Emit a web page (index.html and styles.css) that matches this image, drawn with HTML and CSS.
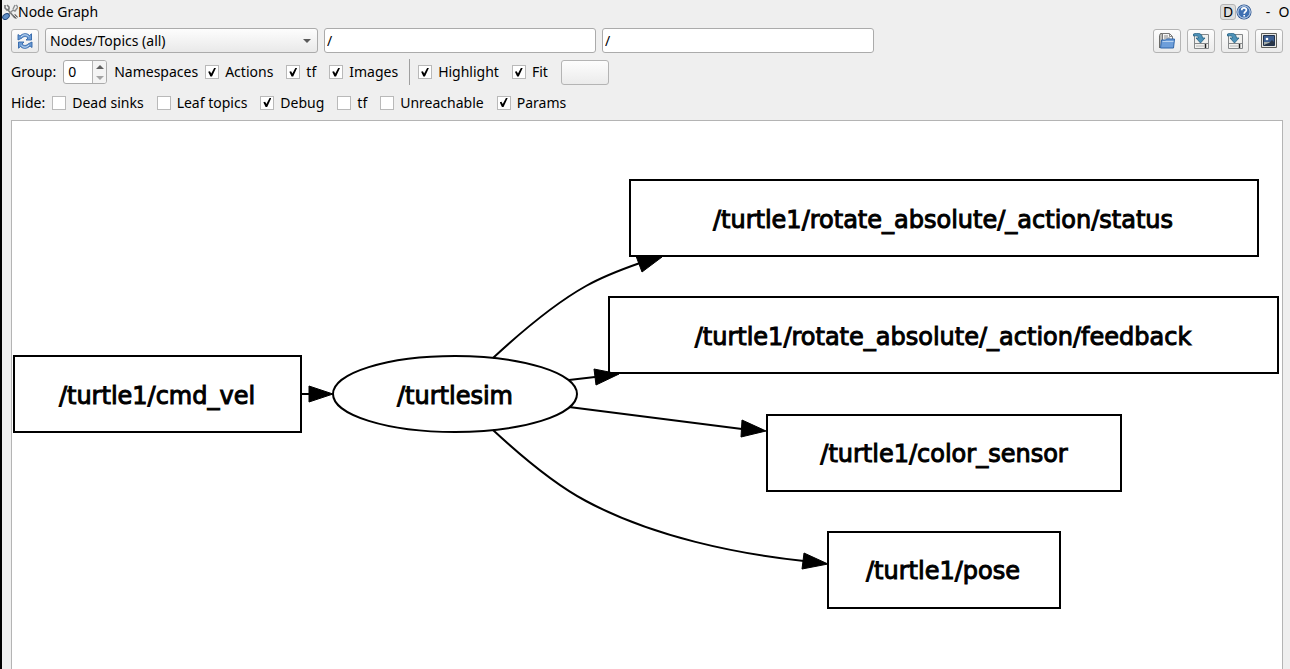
FILE: index.html
```html
<!DOCTYPE html>
<html lang="en">
<head>
<meta charset="utf-8">
<title>Node Graph</title>
<link rel="stylesheet" href="styles.css">
</head>
<body>
<main class="window">
  <header class="titlebar">
    <svg class="app-icon" viewBox="0 0 16 16" aria-hidden="true">
      <path d="M3 1v3l2 2 2-1V3L5 1M6 6l7 8" fill="none" stroke="#77797a" stroke-width="1.6"/>
      <path d="M14 1l2 2-3 4-2-1-6 6M11 5l2-4" fill="none" stroke="#8c8e8f" stroke-width="1.4"/>
      <path d="M12 11l3 3" stroke="#666" stroke-width="3"/>
      <path d="M12 11l3 3" stroke="#ddd" stroke-width="1"/>
      <ellipse cx="4" cy="12.500" rx="3.600" ry="2.500" transform="rotate(-35 4 12.500)" fill="#5f8fc8" stroke="#24477c"/>
    </svg>
    <h1 class="title">Node Graph</h1>
    <button class="dock-btn" type="button">D</button>
    <button class="plain-btn" type="button" aria-label="Help">
      <svg class="icon" viewBox="0 0 16 16" aria-hidden="true">
        <circle cx="8" cy="8" r="7.500" fill="#24508f"/>
        <circle cx="8" cy="8" r="6.200" fill="#3f70b2" stroke="#dce7f5" stroke-width="1"/>
        <path d="M5.700 6.200C5.700 3.200 10.500 3.300 10.400 6c0 1.600-2.200 1.700-2.200 3.700M8.200 11v1.600" fill="none" stroke="#fff" stroke-width="1.700"/>
      </svg>
    </button>
    <button class="plain-btn minimize" type="button">-</button>
    <button class="plain-btn float" type="button">O</button>
  </header>

  <div class="toolbar">
    <button class="btn tool" type="button" aria-label="Refresh">
      <svg class="icon" viewBox="0 0 16 16" aria-hidden="true">
        <path d="M1 7V1.500l2 1.600C6-.2 10.500.2 12.500 2.500L14.500.800V7H9l2-2C9 2.800 6.500 3.300 5 5z" fill="#6b9bd4" stroke="#2f64a8" stroke-width=".9"/>
        <path d="M15 9v5.500l-2-1.600c-3 3.300-7.500 2.900-9.500.6L1.500 15.200V9H7l-2 2c2 2.200 4.500 1.700 6 0z" fill="#6b9bd4" stroke="#2f64a8" stroke-width=".9"/>
        <path d="M4 4C6.500 1 9.500 1.300 11.500 3.500M12 12c-2.500 3-5.500 2.700-7.500.5" fill="none" stroke="#c6dbf2" stroke-width="1"/>
      </svg>
    </button>
    <div class="combo">
      <select class="combo-select" aria-label="Graph type"><option>Nodes/Topics (all)</option></select>
      <svg class="combo-arrow" viewBox="0 0 8 4" aria-hidden="true"><path d="M0 0h8L4 4z" fill="#5a5a5a"/></svg>
    </div>
    <input class="field" type="text" value="/" aria-label="Node filter">
    <input class="field" type="text" value="/" aria-label="Topic filter">
    <div class="actions">
      <button class="btn tool" type="button" aria-label="Load graph">
        <svg class="icon" viewBox="0 0 16 16" aria-hidden="true">
          <path d="M.500 15V2.500l1-2H4V8" fill="#b9b9b6" stroke="#6b6b68"/>
          <path d="M3.500 9V.500h7l3 3V9z" fill="#f5f5f5" stroke="#777"/>
          <path d="M10.500.500v3h3M5 3h4M5 5h6" fill="none" stroke="#888"/>
          <path d="M1.500 15l1-8h4l1-1h8l-1 9z" fill="#6d9eda" stroke="#2f65a9"/>
          <path d="M3.500 8.500h11" stroke="#b7d2f0"/>
        </svg>
      </button>
      <button class="btn tool" type="button" aria-label="Save as DOT">
        <svg class="icon" viewBox="0 0 16 16" aria-hidden="true">
          <path d="M1.500 1.500h14v14h-14z" fill="#f1f1ef" stroke="#85888a"/>
          <path d="M2 10.500h13" stroke="#85888a"/>
          <path d="M3 13h8" stroke="#b8b8b8"/><path d="M12.500 11v4" stroke="#222" stroke-width="1.500"/>
          <path d="M.500 1C5-.500 9 0 9.500 5H12L7.500 10 3 5h2.500C5.500 3 4 2.500.500 3z" fill="#4c91b8" stroke="#235f83" stroke-width=".8"/>
        </svg>
      </button>
      <button class="btn tool" type="button" aria-label="Save as SVG">
        <svg class="icon" viewBox="0 0 16 16" aria-hidden="true">
          <path d="M1.500 1.500h14v14h-14z" fill="#f1f1ef" stroke="#85888a"/>
          <path d="M2 10.500h13" stroke="#85888a"/>
          <path d="M3 13h8" stroke="#b8b8b8"/><path d="M12.500 11v4" stroke="#222" stroke-width="1.500"/>
          <path d="M.500 1C5-.500 9 0 9.500 5H12L7.500 10 3 5h2.500C5.500 3 4 2.500.500 3z" fill="#4c91b8" stroke="#235f83" stroke-width=".8"/>
        </svg>
      </button>
      <button class="btn tool" type="button" aria-label="Save as image">
        <svg class="icon" viewBox="0 0 16 16" aria-hidden="true">
          <path d="M.500 .500h15v14H.500z" fill="#e8e8e3" stroke="#5c5c58"/>
          <path d="M2.500 2.500h11v10h-11z" fill="#3d5f91" stroke="#22324d"/>
          <path d="M3 9h10v3H3z" fill="#a3acab"/>
          <path d="M3 12c2-1 4-2 5-2l3-3 2 2v3z" fill="#2a3647"/>
          <circle cx="6" cy="6" r="1.300" fill="#fff"/>
        </svg>
      </button>
    </div>
  </div>

  <div class="options">
    <label class="caption" for="group">Group:</label>
    <div class="spin">
      <input class="spin-input" id="group" type="text" inputmode="numeric" value="0">
      <div class="spin-steps">
        <button class="step" type="button" aria-label="Increase"><svg class="step-arrow" viewBox="0 0 8 4" aria-hidden="true"><path d="M0 4h8L4 0z" fill="#606060"/></svg></button>
        <button class="step" type="button" aria-label="Decrease"><svg class="step-arrow" viewBox="0 0 8 4" aria-hidden="true"><path d="M0 0h8L4 4z" fill="#a4a4a4"/></svg></button>
      </div>
    </div>
    <span class="caption">Namespaces</span>
    <div class="checks">
      <label class="check"><input class="box" type="checkbox" checked>Actions</label>
      <label class="check"><input class="box" type="checkbox" checked>tf</label>
      <label class="check"><input class="box" type="checkbox" checked>Images</label>
    </div>
    <div class="checks divided">
      <label class="check"><input class="box" type="checkbox" checked>Highlight</label>
      <label class="check"><input class="box" type="checkbox" checked>Fit</label>
      <button class="btn blank" type="button" aria-label="Fit in view"></button>
    </div>
  </div>

  <div class="options hide-row">
    <span class="caption">Hide:</span>
    <div class="checks">
      <label class="check"><input class="box" type="checkbox">Dead sinks</label>
      <label class="check"><input class="box" type="checkbox">Leaf topics</label>
      <label class="check"><input class="box" type="checkbox" checked>Debug</label>
      <label class="check"><input class="box" type="checkbox">tf</label>
      <label class="check"><input class="box" type="checkbox">Unreachable</label>
      <label class="check"><input class="box" type="checkbox" checked>Params</label>
    </div>
  </div>

  <section class="canvas" aria-label="Graph">
    <svg class="graph" viewBox="12 121 1270 548" preserveAspectRatio="xMidYMin meet">
      <g class="edges">
        <path d="M301 394H309"/>
        <path d="M493 358C520 333 552 305 586 286C602 277 620 270 640 263"/>
        <path d="M569 380L595 377"/>
        <path d="M569 407L742 429"/>
        <path d="M493 430C520 455 552 483 586 501C653 537 738 554 804 561"/>
      </g>
      <g class="heads">
        <path d="M309 386L333 394L309 402z"/>
        <path d="M636 256L662 257L642 272z"/>
        <path d="M594 369L619 374L596 385z"/>
        <path d="M742 420L766 431L741 437z"/>
        <path d="M804 553L828 564L802 569z"/>
      </g>
      <g class="nodes">
        <rect x="14" y="356" width="287" height="76"/>
        <ellipse cx="455" cy="394" rx="122" ry="38"/>
        <rect x="630" y="180" width="628" height="76"/>
        <rect x="609" y="297" width="669" height="76"/>
        <rect x="767" y="415" width="354" height="76"/>
        <rect x="828" y="532" width="232" height="76"/>
      </g>
      <g class="names">
        <text x="157" y="404">/turtle1/cmd_vel</text>
        <text x="455" y="404">/turtlesim</text>
        <text x="943" y="228">/turtle1/rotate_absolute/_action/status</text>
        <text x="943" y="345">/turtle1/rotate_absolute/_action/feedback</text>
        <text x="944" y="462">/turtle1/color_sensor</text>
        <text x="943" y="579">/turtle1/pose</text>
      </g>
    </svg>
  </section>
</main>
</body>
</html>
```
FILE: styles.css
```css
* { box-sizing: border-box; }

body {
  margin: 0;
  background: #efefef;
  color: #000;
  font: 14px/20px "Noto Sans", "Open Sans", sans-serif;
}

button, input, select {
  margin: 0;
  padding: 0;
  color: inherit;
  font: inherit;
}

.window {
  display: flex;
  flex-direction: column;
  height: 100vh;
  border-left: 2px solid #000;
  overflow: hidden;
}

.titlebar {
  display: flex;
  align-items: center;
  height: 24px;
  flex: none;
}

.app-icon { width: 16px; height: 16px; }
.title { margin: 0 auto 0 0; font-size: 14px; font-weight: 400; }
.icon { display: block; width: 16px; height: 16px; }

.dock-btn {
  width: 16px;
  height: 16px;
  border: 1px solid #b4b4b4;
  border-radius: 3px;
  background: #dedede;
  line-height: 14px;
}

.plain-btn { border: 0; background: none; }
.minimize { width: 14px; margin-left: 9px; }
.float { width: 12px; margin-left: 3px; }

.toolbar {
  display: flex;
  align-items: center;
  gap: 6px;
  padding: 4px 7px 0 9px;
}

.btn {
  border: 1px solid #b4b4b4;
  border-radius: 3px;
  background: linear-gradient(#fdfdfd, #ebebeb);
}

.tool {
  display: flex;
  align-items: center;
  justify-content: center;
  flex: none;
  width: 28px;
  height: 24px;
}

.combo { position: relative; flex: 0 1 273px; }

.combo-select {
  display: block;
  width: 100%;
  height: 25px;
  padding: 0 20px 0 4px;
  border: 1px solid #ababab;
  border-radius: 3px;
  background: linear-gradient(#fdfdfd, #e9e9e9);
  appearance: none;
}

.combo-arrow {
  position: absolute;
  top: 11px;
  right: 7px;
  width: 8px;
  height: 4px;
  pointer-events: none;
}

.field {
  flex: 0 1 272px;
  min-width: 0;
  height: 25px;
  padding: 0 2px;
  border: 1px solid #ababab;
  border-radius: 3px;
  background: #fff;
}

.actions { display: flex; gap: 6px; margin-left: auto; }

.options {
  display: flex;
  align-items: center;
  gap: 7px;
  padding: 6px 9px 0;
  min-height: 32px;
}

.hide-row { min-height: 35px; padding-top: 0; }

.spin {
  display: flex;
  width: 44px;
  height: 24px;
  border: 1px solid #ababab;
  border-radius: 3px;
  background: #fff;
  overflow: hidden;
}

.spin-input { flex: 1; min-width: 0; padding-left: 4px; border: 0; background: none; }
.spin-steps { display: flex; flex-direction: column; width: 14px; border-left: 1px solid #b4b4b4; }

.step {
  display: flex;
  flex: 1;
  align-items: center;
  justify-content: center;
  border: 0;
  background: #f4f4f4;
}

.step-arrow { width: 8px; height: 4px; }

.checks { display: flex; align-items: center; gap: 13px; }
.divided { height: 26px; margin-left: 4px; padding-left: 8px; border-left: 1px solid #9f9f9f; }
.check { display: flex; align-items: center; gap: 6px; }

.box {
  display: grid;
  place-items: center;
  width: 14px;
  height: 14px;
  border: 1px solid #b9b9b9;
  background: #fff;
  appearance: none;
}

.box:checked::before {
  content: "";
  width: 8px;
  height: 9px;
  background: #000;
  clip-path: polygon(0 48%, 22% 42%, 38% 68%, 78% 0, 100% 0, 48% 100%, 28% 100%);
}

.blank { width: 48px; height: 25px; }

.canvas {
  flex: 1;
  min-height: 0;
  margin: 0 7px 0 9px;
  border: 1px solid #b4b4b4;
  border-bottom: 0;
  background: #fff;
}

.graph { display: block; width: 100%; height: 100%; }
.edges { fill: none; stroke: #000; stroke-width: 2px; }
.heads { fill: #000; stroke: #000; stroke-width: 1px; }
.nodes { fill: none; stroke: #000; stroke-width: 2px; }

.names {
  fill: #000;
  stroke: #000;
  stroke-width: 1px;
  font: 24px "DejaVu Sans", sans-serif;
  text-anchor: middle;
}
```
